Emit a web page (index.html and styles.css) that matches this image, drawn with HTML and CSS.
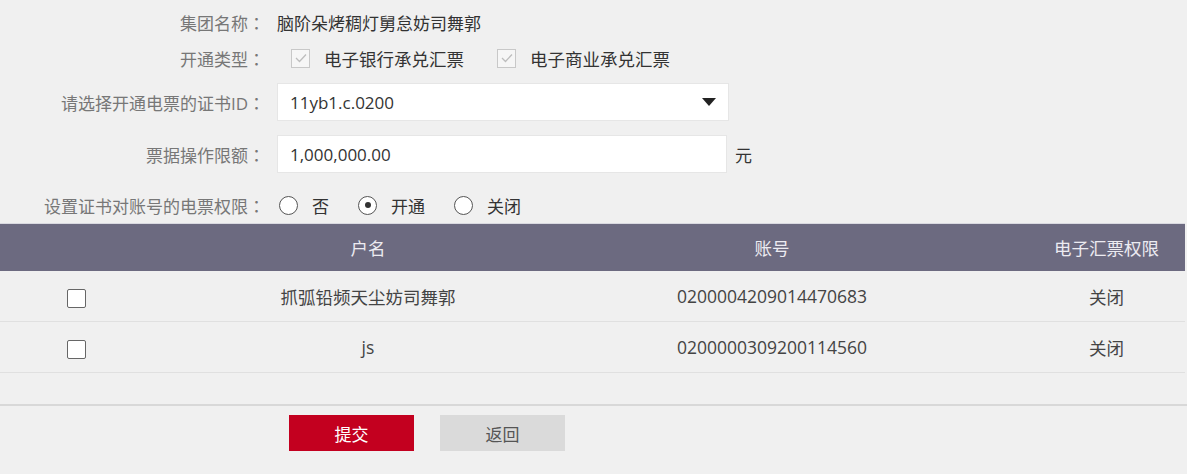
FILE: index.html
```html
<!DOCTYPE html>
<html>
<head>
  <meta charset="utf-8">
  <title>电票权限设置</title>
  <link rel="stylesheet" href="styles.css">
</head>
<body>
  <div class="form">
    <div class="row row-name">
      <span class="label">集团名称<span class="colon">：</span></span>
      <span class="value">脑阶朵烤稠灯舅怠妨司舞郭</span>
    </div>
    <div class="row row-type">
      <span class="label">开通类型<span class="colon">：</span></span>
      <div class="options">
        <label class="check"><span class="box"><svg width="12" height="10" viewBox="0 0 12 10"><path d="M1 5 L4.5 8.5 L11 1.5" fill="none" stroke="#bdbdbd" stroke-width="1.3"/></svg></span>电子银行承兑汇票</label>
        <label class="check"><span class="box"><svg width="12" height="10" viewBox="0 0 12 10"><path d="M1 5 L4.5 8.5 L11 1.5" fill="none" stroke="#bdbdbd" stroke-width="1.3"/></svg></span>电子商业承兑汇票</label>
      </div>
    </div>
    <div class="row row-select">
      <span class="label">请选择开通电票的证书ID<span class="colon">：</span></span>
      <div class="select">
        <span>11yb1.c.0200</span>
        <span class="caret"></span>
      </div>
    </div>
    <div class="row row-input">
      <span class="label">票据操作限额<span class="colon">：</span></span>
      <div class="input">1,000,000.00</div>
      <span class="unit">元</span>
    </div>
    <div class="row row-radio">
      <span class="label">设置证书对账号的电票权限<span class="colon">：</span></span>
      <div class="options">
        <label class="radio"><span class="circle"></span>否</label>
        <label class="radio on"><span class="circle"></span>开通</label>
        <label class="radio"><span class="circle"></span>关闭</label>
      </div>
    </div>
  </div>

  <div class="table">
    <div class="thead">
      <div class="cell"></div>
      <div class="cell">户名</div>
      <div class="cell">账号</div>
      <div class="cell last">电子汇票权限</div>
    </div>
    <div class="trow">
      <div class="cell"><span class="tick"></span></div>
      <div class="cell">抓弧铅频天尘妨司舞郭</div>
      <div class="cell">0200004209014470683</div>
      <div class="cell last">关闭</div>
    </div>
    <div class="trow">
      <div class="cell"><span class="tick"></span></div>
      <div class="cell">js</div>
      <div class="cell">0200000309200114560</div>
      <div class="cell last">关闭</div>
    </div>
  </div>

  <div class="actions">
    <button class="btn btn-submit">提交</button>
    <button class="btn btn-back">返回</button>
  </div>
</body>
</html>
```

FILE: styles.css
```css
body {
  margin: 0;
  background: #f0f0f0;
  font-family: "Open Sans", "Noto Sans CJK SC", sans-serif;
  font-size: 17px;
  color: #333;
}

.form {
  padding-top: 4px;
}

.row {
  display: flex;
  align-items: center;
}

.label {
  width: 265px;
  flex-shrink: 0;
  text-align: right;
  color: #777;
  margin-right: 12px;
  white-space: nowrap;
}

.colon {
  font-family: "Noto Sans CJK TC", sans-serif;
}

.row-name,
.row-type {
  height: 36px;
}

.value {
  color: #333;
}

.options {
  display: flex;
  align-items: center;
}

.check {
  display: flex;
  align-items: center;
  margin-right: 19px;
  color: #333;
  font-size: 17.5px;
}

.check .box {
  width: 19px;
  height: 19px;
  box-sizing: border-box;
  border: 1px solid #c8c8c8;
  background: #f6f6f6;
  margin: 0 14px 0 14px;
  display: flex;
  align-items: center;
  justify-content: center;
}

.row-select {
  margin-top: 7px;
}

.select,
.input {
  width: 452px;
  height: 38px;
  box-sizing: border-box;
  background: #fff;
  border: 1px solid #e6e6e6;
  padding: 0 12px;
  display: flex;
  align-items: center;
  color: #333;
}

.select {
  justify-content: space-between;
}

.caret {
  width: 0;
  height: 0;
  border-left: 7px solid transparent;
  border-right: 7px solid transparent;
  border-top: 8px solid #222;
}

.row-input {
  margin-top: 14px;
}

.input {
  width: 450px;
}

.unit {
  margin-left: 8px;
  color: #333;
}

.row-radio {
  margin-top: 14px;
  height: 36px;
}

.radio {
  display: flex;
  align-items: center;
  margin-right: 27px;
  color: #333;
}

.radio .circle {
  width: 19px;
  height: 19px;
  box-sizing: border-box;
  border: 1px solid #555;
  border-radius: 50%;
  background: #fff;
  margin: 0 14px 0 2px;
  display: flex;
  align-items: center;
  justify-content: center;
}

.radio.on .circle::after {
  content: "";
  width: 6px;
  height: 6px;
  border-radius: 50%;
  background: #333;
}

.table {
  width: 1185px;
}

.thead,
.trow {
  display: grid;
  grid-template-columns: 152px 432px 376px 1fr;
  align-items: center;
  text-align: center;
  font-size: 17.5px;
}

.thead {
  height: 47px;
  background: #6c6a80;
  color: #ecebf1;
  border-top: 1px solid #d9d9e0;
}

.trow {
  height: 50px;
  border-bottom: 1px solid #e0e0e0;
  color: #444;
}

.cell.last {
  padding-left: 68px;
}

.tick {
  display: inline-block;
  width: 19px;
  height: 19px;
  box-sizing: border-box;
  border: 1.5px solid #666;
  border-radius: 2px;
  background: #fff;
  vertical-align: middle;
}

.actions {
  margin-top: 31px;
  border-top: 2px solid #d8d8d8;
  padding: 9px 0 0 289px;
  display: flex;
  gap: 26px;
}

.btn {
  width: 125px;
  height: 36px;
  border: none;
  font-family: "Open Sans", "Noto Sans CJK SC", sans-serif;
  font-size: 17px;
  padding: 0;
}

.btn-submit {
  background: #c3001f;
  color: #fff;
}

.btn-back {
  background: #dadada;
  color: #555;
}
```
